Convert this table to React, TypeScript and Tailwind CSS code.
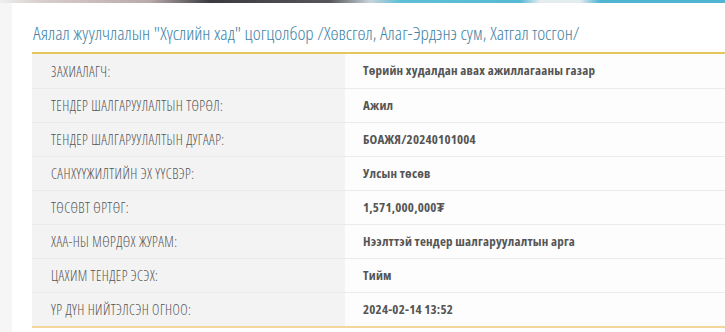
const rows: [string, string][] = [
  ['ЗАХИАЛАГЧ:', 'Төрийн худалдан авах ажиллагааны газар'],
  ['ТЕНДЕР ШАЛГАРУУЛАЛТЫН ТӨРӨЛ:', 'Ажил'],
  ['ТЕНДЕР ШАЛГАРУУЛАЛТЫН ДУГААР:', 'БОАЖЯ/20240101004'],
  ['САНХҮҮЖИЛТИЙН ЭХ ҮҮСВЭР:', 'Улсын төсөв'],
  ['ТӨСӨВТ ӨРТӨГ:', '1,571,000,000₮'],
  ['ХАА-НЫ МӨРДӨХ ЖУРАМ:', 'Нээлттэй тендер шалгаруулалтын арга'],
  ['ЦАХИМ ТЕНДЕР ЭСЭХ:', 'Тийм'],
  ['ҮР ДҮН НИЙТЭЛСЭН ОГНОО:', '2024-02-14 13:52'],
];

export default function App() {
  return (
    <div className="w-[725px] h-[332px] overflow-hidden bg-white font-['Open_Sans',sans-serif] [font-stretch:75%]">
      {/* bottom edge of the banner photo above */}
      <div className="h-[3px] bg-[linear-gradient(to_right,#eeeeee_0px,#d9cfcc_40px,#b9a9aa_150px,#3b3b3f_210px,#55575c_330px,#c9d3d8_370px,#5fbfd8_400px,#58b9d4_520px,#e4ecef_540px,#e4ecef_580px,#4fb5d3_600px,#4fb5d3_725px)]" />
      <div className="flex h-[329px]">
        <div className="w-[12px] bg-[#f6f6f6]" />
        <div className="flex-1 pl-[20px] pt-[17px]">
          <h2 className="text-[19px] leading-[26px] font-light text-[#3f84a6] pl-[1px] mb-[6px] whitespace-nowrap">
            Аялал жуулчлалын "Хүслийн хад" цогцолбор /Хөвсгөл, Алаг-Эрдэнэ сум, Хатгал тосгон/
          </h2>
          <div className="border-t-2 border-[#e3c75a] border-b-2 border-b-[#f5d69a]">
            {rows.map(([label, value], i) => (
              <div
                key={label}
                className={`flex h-[34px] items-center whitespace-nowrap ${i > 0 ? 'border-t border-[#ebebeb]' : ''}`}
              >
                <div className="w-[313px] h-full flex items-center bg-[#f3f3f3] pl-[19px] text-[14px] tracking-[0.4px] font-light text-[#555]">
                  {label}
                </div>
                <div className="flex-1 h-full flex items-center bg-[#fdfdfd] pl-[18px] text-[13px] tracking-[0.2px] font-bold text-[#555]">
                  {value}
                </div>
              </div>
            ))}
          </div>
        </div>
      </div>
    </div>
  );
}
